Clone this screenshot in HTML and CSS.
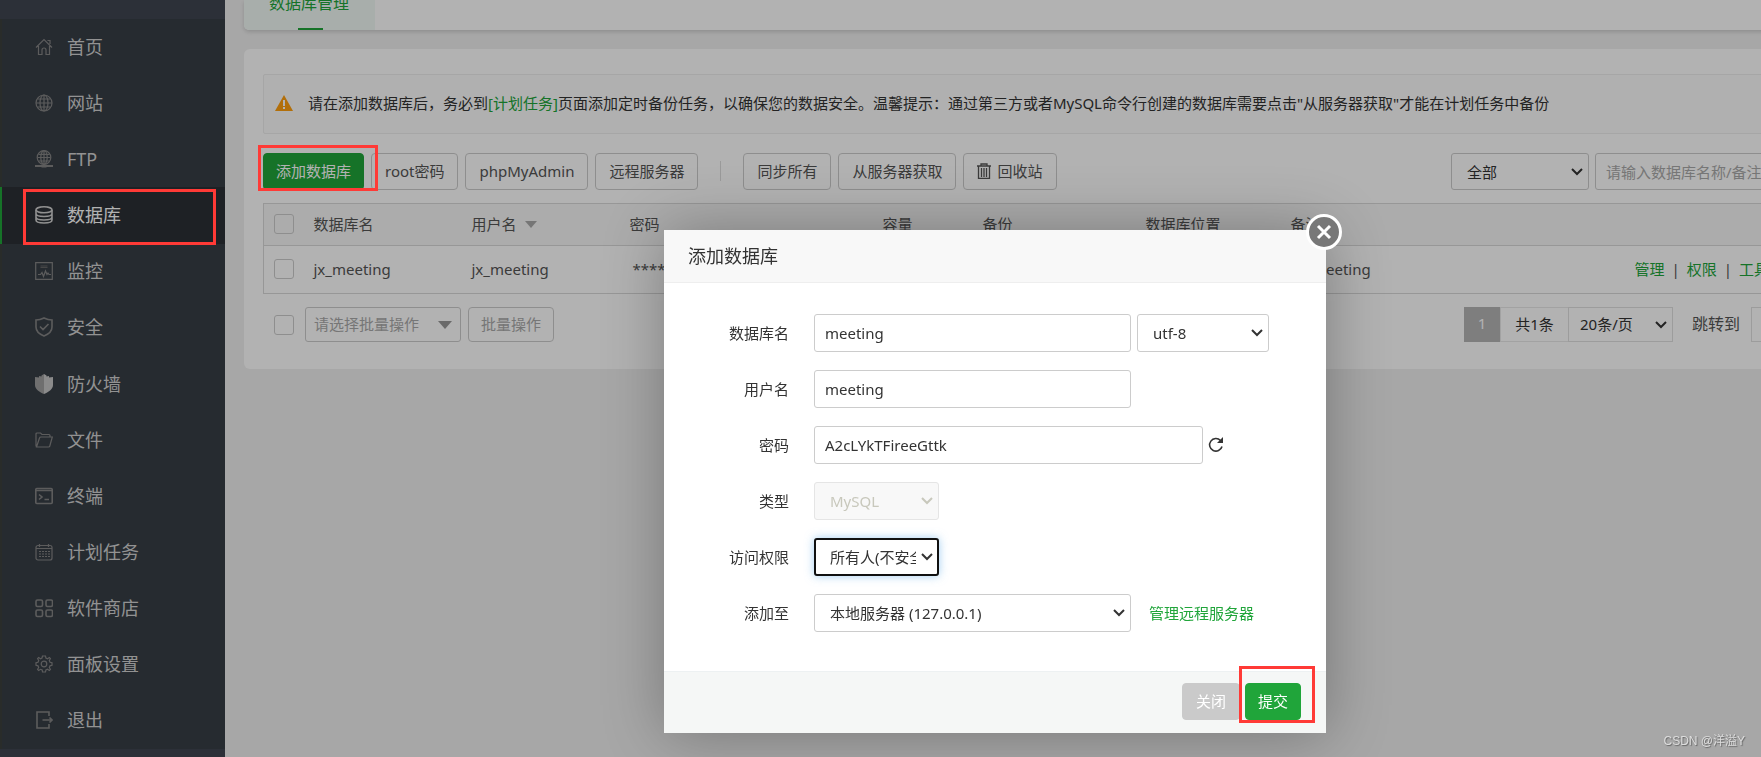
FILE: index.html
```html
<!DOCTYPE html>
<html lang="zh-CN">
<head>
<meta charset="utf-8">
<title>数据库管理</title>
<link rel="stylesheet" href="styles.css">
</head>
<body>
<div class="app">
  <nav class="sidebar">
    <ul class="menu">
      <li><a href="#"><svg viewBox="0 0 18 18"><path d="M1 9.500 9 1.500l8 8M3.500 8v8.500H7V12a2 2 0 0 1 4 0v4.500h3.500V8M12.500 2.500h2.500V6"/></svg>首页</a></li>
      <li><a href="#"><svg viewBox="0 0 18 18"><circle cx="9" cy="9" r="8"/><ellipse cx="9" cy="9" rx="4" ry="8"/><path d="M9 1v16M1 9h16M2.500 5h13M2.500 13h13"/></svg>网站</a></li>
      <li><a href="#"><svg viewBox="0 0 18 18"><circle cx="9" cy="7.500" r="6.800"/><ellipse cx="9" cy="7.500" rx="3.200" ry="6.800"/><path d="M9 1v13M2.500 7.500h13M3.500 4.300h11M3.500 11h11"/><path class="thick" d="M0 16h18"/><path class="thick" d="M6.500 16.500h5"/></svg>FTP</a></li>
      <li class="active"><a href="#"><svg viewBox="0 0 18 18"><ellipse cx="9" cy="3.800" rx="8" ry="3"/><path d="M1 4v10c0 4 16 4 16 0V4M1 7.500c0 4 16 4 16 0M1 11c0 4 16 4 16 0"/></svg>数据库</a></li>
      <li><a href="#"><svg viewBox="0 0 18 18"><path d="M.7.700h16.600v16.600H.7zM3 12.500h2.500l1.500-2 1.500 4L10.500 9l1.500 3.500 1-1.500 1 1.500h2"/><path class="dim" d="M5.500 4h7M5.500 5.500h7"/></svg>监控</a></li>
      <li><a href="#"><svg class="bold" viewBox="0 0 18 20"><path d="M9 1C6 2.500 4 3 1 3v7c0 4 3 7 8 9 5-2 8-5 8-9V3c-3 0-5-.5-8-2zM5 9.500l3 3 5.500-5.500"/></svg>安全</a></li>
      <li><a href="#"><svg class="solid" viewBox="0 0 18 20"><path class="left" d="M9 0 6.500 1.500v1L4 2v1.500L0 3v8c0 4 4 7 9 9z"/><path class="right" d="m9 0 2.500 1.500v1L14 2v1.500l4-.5v8c0 4-4 7-9 9z"/></svg>防火墙</a></li>
      <li><a href="#"><svg viewBox="0 0 18 18"><path d="M1 15.500V3q0-1 1-1h3.500L7 3.500h7q1 0 1 1V6M1.500 16l3-9q.3-1 1.300-1h11.500l-2.500 9q-.3 1-1.300 1z"/></svg>文件</a></li>
      <li><a href="#"><svg class="bold" viewBox="0 0 18 18"><rect x=".8" y="1.500" width="16.400" height="15" rx="1"/><path d="M1 3.500h16M4 7.500 7 10l-3 2.500M9.500 12.500H14"/></svg>终端</a></li>
      <li><a href="#"><svg viewBox="0 0 18 18"><rect x="1" y="2.500" width="16" height="14.500" rx="2"/><path d="M1 5.500h16M4.500 1v3M13.500 1v3"/><path class="dots" d="M4 8.500h11M4 11h11M4 13.500h11"/></svg>计划任务</a></li>
      <li><a href="#"><svg class="bold" viewBox="0 0 18 18"><rect x="1" y="1" width="6.500" height="6.500" rx="1.500"/><rect x="11" y="1" width="6.500" height="6.500" rx="1.500"/><rect x="1" y="11" width="6.500" height="6.500" rx="1.500"/><rect x="11" y="11" width="6.500" height="6.500" rx="1.500"/></svg>软件商店</a></li>
      <li><a href="#"><svg viewBox="0 0 18 18"><path d="m7.500 1-.5 2-1.500.7L3.700 2.600 2.600 3.700l1.100 1.800L3 7.300 1 7.700v2.600l2 .5.700 1.700-1.100 1.800 1.100 1.100 1.800-1.100L7.200 15l.3 2h3l.4-2 1.600-.7 1.800 1.100 1.100-1.100-1.100-1.800.7-1.700 2-.5V7.700l-2-.4-.7-1.800 1.100-1.800-1.100-1.100-1.800 1.100L10.900 3l-.4-2z"/><circle cx="9" cy="9" r="2.800"/></svg>面板设置</a></li>
      <li><a href="#"><svg class="bold" viewBox="0 0 18 18"><path d="M14 5V1H2v16h12v-4M7.500 9h9.500M14.500 6.500 17 9l-2.500 2.500"/></svg>退出</a></li>
    </ul>
  </nav>
  <main class="main">
    <div class="content">
      <div class="tabs"><a class="tab" href="#">数据库管理</a></div>
      <section class="card">
        <div class="notice">
          <svg viewBox="0 0 18 16"><path d="M9 0 18 16H0z" fill="#ff9f0f"/><path d="M8 5h2v6H8zM8 12h2v2H8z" fill="#fff"/></svg>
          <p>请在添加数据库后，务必到<a href="#">[计划任务]</a>页面添加定时备份任务，以确保您的数据安全。温馨提示：通过第三方或者MySQL命令行创建的数据库需要点击"从服务器获取"才能在计划任务中备份</p>
        </div>
        <div class="toolbar">
          <button class="btn primary">添加数据库</button>
          <button class="btn">root密码</button>
          <button class="btn">phpMyAdmin</button>
          <button class="btn">远程服务器</button>
          <span class="divider"></span>
          <button class="btn">同步所有</button>
          <button class="btn">从服务器获取</button>
          <button class="btn"><svg viewBox="0 0 14 16"><path d="M0 3h14M4 3V1h6v2M1.500 3.500v12h11v-12M4.500 5v9M7 5v9M9.500 5v9"/></svg>回收站</button>
          <div class="filters">
            <select class="field" aria-label="数据库位置"><option>全部</option></select>
            <input class="field" type="text" aria-label="搜索" placeholder="请输入数据库名称/备注">
          </div>
        </div>
        <table class="grid">
          <colgroup><col class="c-check"><col class="c-name"><col class="c-name"><col class="c-pass"><col class="c-size"><col class="c-back"><col class="c-place"><col class="c-note"><col></colgroup>
          <thead><tr><th><input type="checkbox" aria-label="全选"></th><th>数据库名</th><th>用户名<i class="caret"></i></th><th>密码</th><th>容量</th><th>备份</th><th>数据库位置</th><th>备注</th><th></th></tr></thead>
          <tbody><tr><td><input type="checkbox" aria-label="选择 jx_meeting"></td><td>jx_meeting</td><td>jx_meeting</td><td class="secret">*****</td><td></td><td></td><td></td><td class="remark">jx_meeting</td><td class="actions"><a href="#">管理</a><span>|</span><a href="#">权限</a><span>|</span><a href="#">工具</a></td></tr></tbody>
        </table>
        <div class="table-foot">
          <input type="checkbox" aria-label="选择全部行">
          <select class="field batch" aria-label="批量操作"><option>请选择批量操作</option></select>
          <button class="btn muted">批量操作</button>
          <div class="pager">
            <span class="current">1</span><span class="total">共1条</span>
            <select class="field" aria-label="每页条数"><option>20条/页</option></select>
            <label for="jump">跳转到</label><input id="jump" class="field" type="text">
          </div>
        </div>
      </section>
    </div>
  </main>
</div>
<div class="mask"></div>
<div class="dialog" role="dialog" aria-labelledby="dialog-title">
  <h2 id="dialog-title">添加数据库</h2>
  <button class="close" aria-label="关闭窗口"><svg viewBox="0 0 38 38"><circle cx="19" cy="19" r="16.500"/><path d="m13 13 12 12M25 13 13 25"/></svg></button>
  <form>
    <div class="row"><label for="db">数据库名</label><input id="db" class="field medium" type="text" value="meeting"><select class="field charset" aria-label="字符集"><option>utf-8</option></select></div>
    <div class="row"><label for="user">用户名</label><input id="user" class="field medium" type="text" value="meeting"></div>
    <div class="row"><label for="pass">密码</label><input id="pass" class="field long" type="text" value="A2cLYkTFireeGttk"><button type="button" class="refresh" aria-label="随机密码"><svg viewBox="0 0 16 16"><path d="M14 9.500A6.300 6.300 0 1 1 12.500 3.500"/><path class="tip" d="M15 0v6H9z"/></svg></button></div>
    <div class="row"><label for="type">类型</label><select id="type" class="field short" disabled><option>MySQL</option></select></div>
    <div class="row"><label for="access">访问权限</label><select id="access" class="field short focused"><option>所有人(不安全)</option></select></div>
    <div class="row"><label for="server">添加至</label><select id="server" class="field medium"><option>本地服务器 (127.0.0.1)</option></select><a href="#">管理远程服务器</a></div>
  </form>
  <footer><button class="btn cancel">关闭</button><button class="btn primary">提交</button></footer>
</div>
<div class="mark mark-menu"></div>
<div class="mark mark-add"></div>
<div class="mark mark-submit"></div>
<div class="watermark">CSDN @洋溢Y</div>
</body>
</html>
```
FILE: styles.css
```css
* { box-sizing: border-box; }
body {
  margin: 0;
  overflow: hidden;
  background: #f0f0f0;
  color: #555;
  font: 15px/20px "Noto Sans", "Noto Sans CJK SC", sans-serif;
}
a { color: #20a53a; text-decoration: none; }
button, input, select { margin: 0; font: inherit; color: inherit; }
.app { display: flex; min-height: 100vh; }

.sidebar { display: flex; width: 225px; flex: none; padding: 19px 0 8px; background: #3f4651; }
.menu { display: flex; flex: 1; flex-direction: column; margin: 0; padding: 0; list-style: none; background: #373e46; }
.menu li { display: flex; flex: 1; border-left: 2px solid #3c403d; }
.menu a { display: flex; flex: 1; align-items: center; gap: 14px; padding: 0 0 1px 33px; color: #d2d2d2; font-size: 18px; line-height: 24px; }
.menu svg { width: 18px; height: 20px; fill: none; stroke: #858585; stroke-width: 1.2; }
.menu svg.bold { stroke-width: 1.6; }
.menu .thick { stroke-width: 2; }
.menu .dim { stroke: #666; }
.menu .dots { stroke-dasharray: 2 1; stroke-width: 1; }
.menu .solid { stroke: none; }
.menu .left { fill: #a0a0a0; }
.menu .right { fill: #c8c8c8; }
.menu .active { border-left-color: #20a53a; background: #2b3035; }
.menu .active a { color: #fff; }
.menu .active svg { stroke: #d0d0d0; stroke-width: 1.6; }

.main { flex: 1; min-width: 0; overflow: hidden; }
.content { width: calc(100% + 228px); padding: 0 19px; }
.tabs { display: flex; height: 30px; background: #fff; border-radius: 0 0 5px 5px; box-shadow: 0 2px 4px #ccc; }
.tab { position: relative; display: flex; align-items: flex-end; padding: 0 26px 15px 25px; background: #f1f9f5; border-radius: 0 0 0 5px; font-size: 16px; line-height: 24px; }
.tab::after { content: ""; position: absolute; bottom: 0; left: 50%; width: 25px; height: 2px; margin-left: -12px; background: #20a53a; }
.card { margin-top: 19px; padding: 25px 19px 27px; background: #fff; border-radius: 6px; }
.notice { display: flex; align-items: center; gap: 15px; height: 60px; padding: 0 11px 2px; border: 1px solid #eee; border-radius: 2px; background: #fcfcfc; color: #333; }
.notice svg { width: 18px; height: 16px; }
.notice p { margin: 0; white-space: nowrap; }

.toolbar { display: flex; gap: 7px; margin-top: 19px; }
.btn { display: flex; align-items: center; gap: 6px; height: 37px; padding: 0 13px 2px; border: 1px solid #ccc; border-radius: 4px; background: transparent; white-space: nowrap; }
.btn svg { width: 14px; height: 16px; fill: none; stroke: #555; stroke-width: 1.3; }
.btn.primary { padding: 0 12px 2px; border-color: #20a53a; background: #20a53a; color: #fff; }
.divider { width: 1px; height: 20px; margin: 8px 15px; background: #ddd; }
.filters { display: flex; gap: 6px; margin-left: auto; }
.filters select { width: 138px; }
.filters input { width: 356px; }

.field { height: 37px; padding: 0 10px; border: 1px solid #ccc; border-radius: 3px; background-color: #fff; color: #333; outline: none; }
select.field { appearance: none; padding: 0 22px 0 15px; background-image: url("data:image/svg+xml,%3Csvg xmlns='http://www.w3.org/2000/svg' viewBox='0 0 12 8'%3E%3Cpath d='M1 1l5 5 5-5' fill='none' stroke='%23333' stroke-width='2'/%3E%3C/svg%3E"); background-repeat: no-repeat; background-position: right 5px center; background-size: 12px 8px; }
::placeholder { color: #aaa; opacity: 1; }

input[type="checkbox"] { display: block; width: 20px; height: 20px; flex: none; appearance: none; border: 1px solid #ccc; border-radius: 3px; }
.grid { width: 100%; margin-top: 13px; table-layout: fixed; border: 1px solid #d8d8d8; border-collapse: collapse; }
.grid th, .grid td { padding: 0 0 2px; text-align: left; font-weight: 400; white-space: nowrap; }
.grid th { height: 42px; background: #f6f6f6; }
.grid td { height: 48px; border-top: 1px solid #d8d8d8; }
.grid th:first-child, .grid td:first-child { padding-left: 10px; }
.grid .secret, .grid .remark { padding-left: 3px; }
.c-check { width: 50px; }
.c-name { width: 158px; }
.c-pass { width: 253px; }
.c-size { width: 100px; }
.c-back { width: 163px; }
.c-place { width: 145px; }
.c-note { width: 344px; }
.caret { display: inline-block; margin-left: 8px; border: 6px solid transparent; border-top: 7px solid #aaa; border-bottom: 0; vertical-align: 2px; }
.actions span { margin: 0 7px; }

.table-foot { display: flex; align-items: center; margin-top: 13px; }
.table-foot > input { margin: 0 11px; }
.table-foot .field, .table-foot .btn { height: 35px; }
.table-foot .field { padding-bottom: 2px; }
.table-foot .batch { width: 156px; margin-right: 7px; padding-left: 8px; color: #aaa; background-image: url("data:image/svg+xml,%3Csvg xmlns='http://www.w3.org/2000/svg' viewBox='0 0 14 8'%3E%3Cpath d='M0 0h14L7 8z' fill='%23999'/%3E%3C/svg%3E"); background-size: 14px 8px; background-position: right 8px center; }
.btn.muted { padding: 0 12px 2px; color: #aaa; }
.pager { display: flex; align-items: center; margin-left: auto; color: #333; }
.pager span { height: 35px; line-height: 32px; text-align: center; }
.current { width: 36px; background: #b5b5b5; color: #fff; }
.total { width: 69px; border: 1px solid #e8e8e8; }
.pager .field { border-color: #e0e0e0; border-radius: 0; }
.pager select.field { width: 105px; margin-left: -1px; padding-left: 11px; }
.pager label { margin: 0 11px 0 19px; padding-bottom: 2px; font-size: 16px; color: #555; }
#jump { width: 200px; }

.mask { position: fixed; inset: 0; background: rgba(0, 0, 0, .3); }
.dialog { position: absolute; top: 230px; left: 664px; width: 662px; background: #fff; color: #333; border-radius: 2px; box-shadow: 1px 1px 62px rgba(0, 0, 0, .3); }
.dialog h2 { margin: 0; height: 53px; padding: 0 24px; border-bottom: 1px solid #eee; background: #f8f8f8; font-size: 18px; line-height: 52px; font-weight: 400; }
.close { position: absolute; top: -17px; right: -17px; width: 38px; height: 38px; padding: 0; border: 0; background: none; }
.close svg { display: block; fill: #787878; stroke: #fff; stroke-width: 3; }
.dialog form { display: grid; gap: 18px; padding: 31px 25px 39px; }
.row { display: flex; align-items: center; }
.row label { width: 100px; margin-right: 25px; text-align: right; }
.row .field { height: 38px; }
.medium { width: 317px; }
.long { width: 389px; }
.short { width: 125px; }
.charset { width: 132px; margin-left: 6px; }
.row a { margin-left: 18px; }
.row select:disabled { border-color: #e5e5e5; background-color: #f8f8f8; color: #c8c8bc; opacity: 1; background-image: url("data:image/svg+xml,%3Csvg xmlns='http://www.w3.org/2000/svg' viewBox='0 0 12 8'%3E%3Cpath d='M1 1l5 5 5-5' fill='none' stroke='%23c8c8bc' stroke-width='2'/%3E%3C/svg%3E"); }
.row .focused { padding: 0 21px 0 14px; border: 2px solid #111; background-position: right 4px center; box-shadow: 0 0 10px rgba(102, 175, 233, .6); }
.refresh { width: 16px; height: 16px; margin-left: 5px; padding: 0; border: 0; background: none; }
.refresh svg { display: block; fill: none; stroke: #333; stroke-width: 1.6; }
.refresh .tip { fill: #333; stroke: none; }
.dialog footer { display: flex; justify-content: flex-end; gap: 5px; padding: 11px 25px 13px; border-top: 1px solid #edf1f2; background: #f5f7f6; }
.btn.cancel { border-color: #cacaca; background: #cacaca; color: #fff; }

.mark { position: absolute; border: 3px solid #ff3a36; }
.mark-menu { top: 189px; left: 23px; width: 193px; height: 56px; }
.mark-add { top: 145px; left: 258px; width: 120px; height: 46px; }
.mark-submit { top: 666px; left: 1239px; width: 76px; height: 57px; }
.watermark { position: absolute; right: 16px; bottom: 6px; color: #ddd; font: 12px/20px "Liberation Sans", "Noto Sans CJK SC", sans-serif; text-shadow: 1px 1px 1px #666; }
```
